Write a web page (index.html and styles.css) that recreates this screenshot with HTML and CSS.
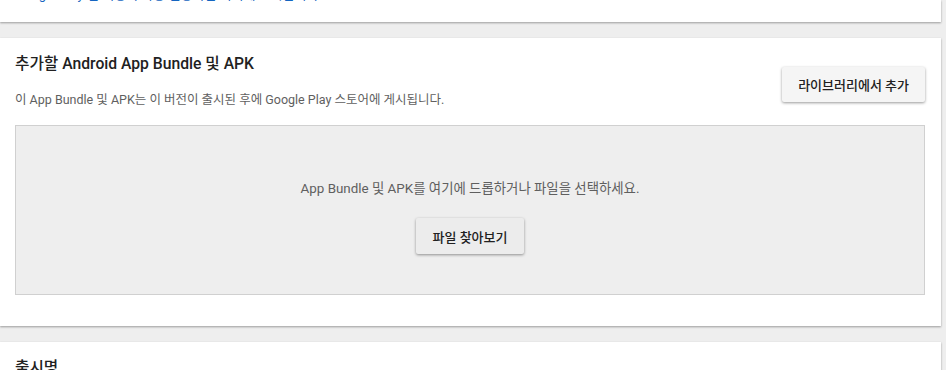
FILE: index.html
```html
<!DOCTYPE html>
<html lang="ko">
<head>
    <meta charset="UTF-8">
    <meta name="viewport" content="width=device-width, initial-scale=1.0">
    <title>Android App Bundle 및 APK</title>
    <link rel="stylesheet" href="styles.css">
</head>
<body>
    <div class="page">
        <div class="card card-top">
            <p class="link-text">Google Play 앱 서명이 사용 설정되면 여기에 표시됩니다.</p>
        </div>

        <div class="card card-upload">
            <div class="card-header">
                <div>
                    <h2>추가할 Android App Bundle 및 APK</h2>
                    <p class="subtitle">이 App Bundle 및 APK는 이 버전이 출시된 후에 Google Play 스토어에 게시됩니다.</p>
                </div>
                <button class="raised-button">라이브러리에서 추가</button>
            </div>

            <div class="drop-zone">
                <p>App Bundle 및 APK를 여기에 드롭하거나 파일을 선택하세요.</p>
                <button class="raised-button browse">파일 찾아보기</button>
            </div>
        </div>

        <div class="card card-bottom">
            <h2>출시명</h2>
        </div>
    </div>
</body>
</html>
```

FILE: styles.css
```css
/* 全体 */
body {
    margin: 0;
    padding: 0;
    background-color: #eeeeee;
    font-family: Roboto, "Noto Sans CJK KR", sans-serif;
    color: #212121;
    overflow: hidden;
}
.page {
    padding-right: 5px;
}
.card {
    background-color: #ffffff;
    box-shadow: 0 1px 2px rgba(0, 0, 0, 0.35);
    margin-bottom: 16px;
}
h2 {
    margin: 0;
    font-size: 15.7px;
    font-weight: 500;
    line-height: 20px;
}

/* 上のカード */
.card-top {
    height: 22px;
    overflow: hidden;
    padding-left: 15px;
}
.link-text {
    margin: -13px 0 0;
    font-size: 13px;
    line-height: 16px;
    color: #1565c0;
}

/* アップロード */
.card-upload {
    padding: 16px 16px 31px 15px;
}
.card-header {
    display: flex;
    justify-content: space-between;
    align-items: flex-start;
}
.subtitle {
    margin: 18px 0 0;
    font-size: 12.5px;
    line-height: 16px;
    color: #5f5f5f;
}
.raised-button {
    margin-top: 13px;
    height: 35px;
    padding: 0 16px;
    border: none;
    border-radius: 2px;
    background-color: #f5f5f5;
    box-shadow: 0 1px 3px rgba(0, 0, 0, 0.4);
    font-family: Roboto, "Noto Sans CJK KR", sans-serif;
    font-size: 13px;
    font-weight: 500;
    color: #212121;
    cursor: pointer;
}
.drop-zone {
    margin-top: 17px;
    height: 168px;
    border: 1px solid #d0d0d0;
    background-color: #eeeeee;
    display: flex;
    flex-direction: column;
    align-items: center;
}
.drop-zone p {
    margin: 54px 0 0;
    font-size: 13.4px;
    line-height: 18px;
    color: #5f5f5f;
}
.raised-button.browse {
    margin-top: 20px;
    height: 36px;
    width: 108px;
    padding: 0;
    background-color: #ececec;
}

/* 下のカード */
.card-bottom {
    padding: 16px 15px;
    height: 60px;
}
```
